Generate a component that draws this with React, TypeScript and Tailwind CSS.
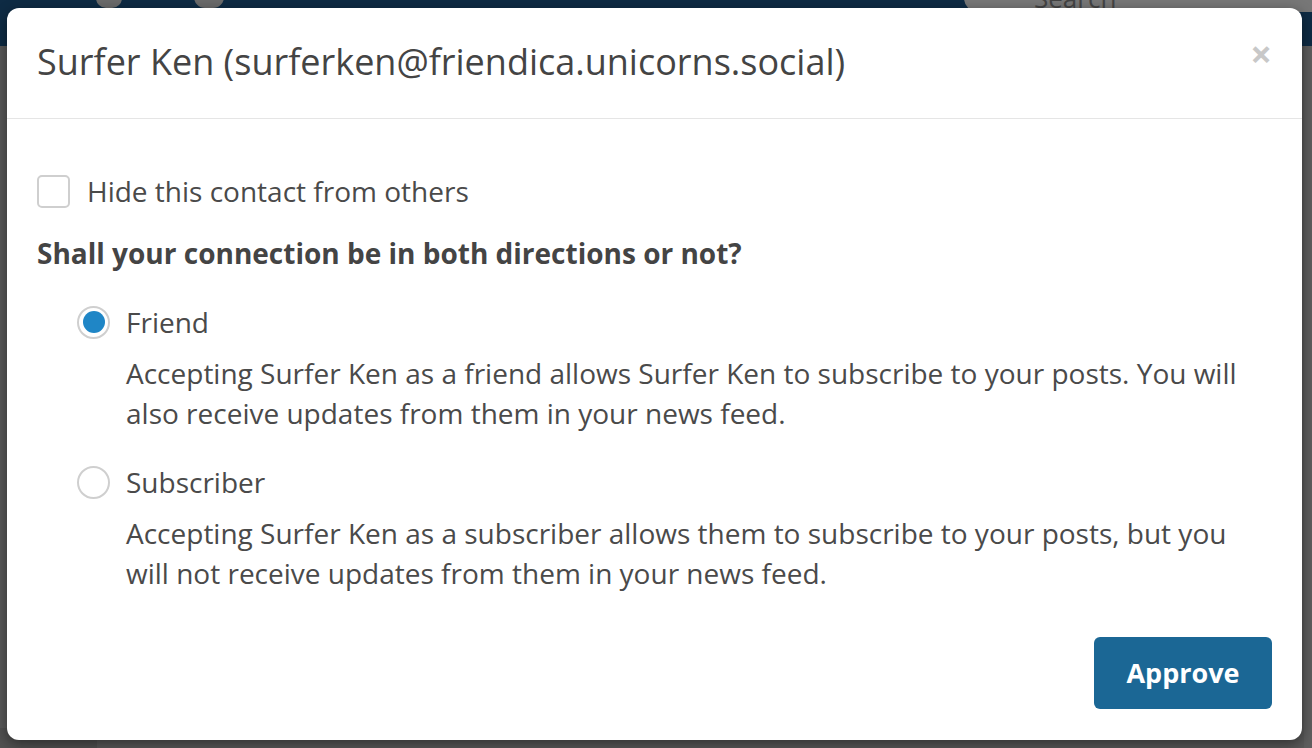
export default function App() {
    return (
        <div className="relative w-[1312px] h-[748px] overflow-hidden bg-[#595959] font-['Open_Sans',sans-serif]">
            {/* page behind the overlay */}
            <div className="h-[46px] bg-[#0e2b44] flex items-start">
                <div className="ml-[96px] mt-[-12px] w-[26px] h-[20px] rounded-full bg-[#6b6b6b]"/>
                <div className="ml-[72px] mt-[-14px] w-[30px] h-[22px] rounded-full bg-[#6b6b6b]"/>
                <div className="ml-auto mt-[-16px] w-[348px] h-[28px] rounded-l-[16px] bg-[#777] pl-[70px] text-[26px] leading-[28px] text-[#444]">Search</div>
            </div>
            <div className="absolute left-0 bottom-0 w-[97px] h-[20px] bg-[#515151]"/>
            <div className="absolute right-0 top-[46px] w-[8px] h-[702px] bg-[#5e5e5e]"/>

            {/* modal */}
            <div className="absolute left-[7px] top-[8px] w-[1295px] h-[732px] bg-white rounded-[12px] shadow-[0_4px_14px_rgba(0,0,0,0.45)] flex flex-col text-[#4a4a4a]">
                <div className="h-[111px] border-b border-[#e5e5e5] flex items-center pl-[30px] pr-[30px]">
                    <h4 className="text-[36px] leading-[44px] text-[#444] mt-[-2px]">Surfer Ken (surferken@friendica.unicorns.social)</h4>
                    <span className="ml-auto text-[38px] font-bold text-[#c8c8c8] leading-none mt-[-20px]">×</span>
                </div>
                <div className="flex-1 px-[30px] pt-[52px] pb-[31px] flex flex-col text-[28px] leading-[40px]">
                    <label className="flex items-center gap-[17px]">
                        <span className="w-[33px] h-[33px] rounded-[5px] border-2 border-[#cfcfcf] bg-white"/>
                        <span>Hide this contact from others</span>
                    </label>
                    <p className="mt-[22px] font-bold text-[#444]">Shall your connection be in both directions or not?</p>
                    <div className="ml-[40px] mt-[29px] flex flex-col">
                        <Radio checked label="Friend"/>
                        <p className="ml-[49px] mt-[11px]">Accepting Surfer Ken as a friend allows Surfer Ken to subscribe to your posts. You will also receive updates from them in your news feed.</p>
                        <div className="mt-[29px]">
                            <Radio label="Subscriber"/>
                        </div>
                        <p className="ml-[49px] mt-[11px]">Accepting Surfer Ken as a subscriber allows them to subscribe to your posts, but you will not receive updates from them in your news feed.</p>
                    </div>
                    <div className="mt-auto flex justify-end">
                        <button className="w-[178px] h-[72px] rounded-[6px] bg-[#1b6795] text-white font-bold text-[27px]">Approve</button>
                    </div>
                </div>
            </div>
        </div>
    )
}

function Radio({checked, label}: { checked?: boolean; label: string }) {
    return (
        <label className="flex items-center gap-[16px]">
            <span className="w-[33px] h-[33px] rounded-full border-2 border-[#cfcfcf] bg-white flex items-center justify-center">
                {checked && <span className="w-[22px] h-[22px] rounded-full bg-[#1f86c6]"/>}
            </span>
            <span>{label}</span>
        </label>
    )
}
